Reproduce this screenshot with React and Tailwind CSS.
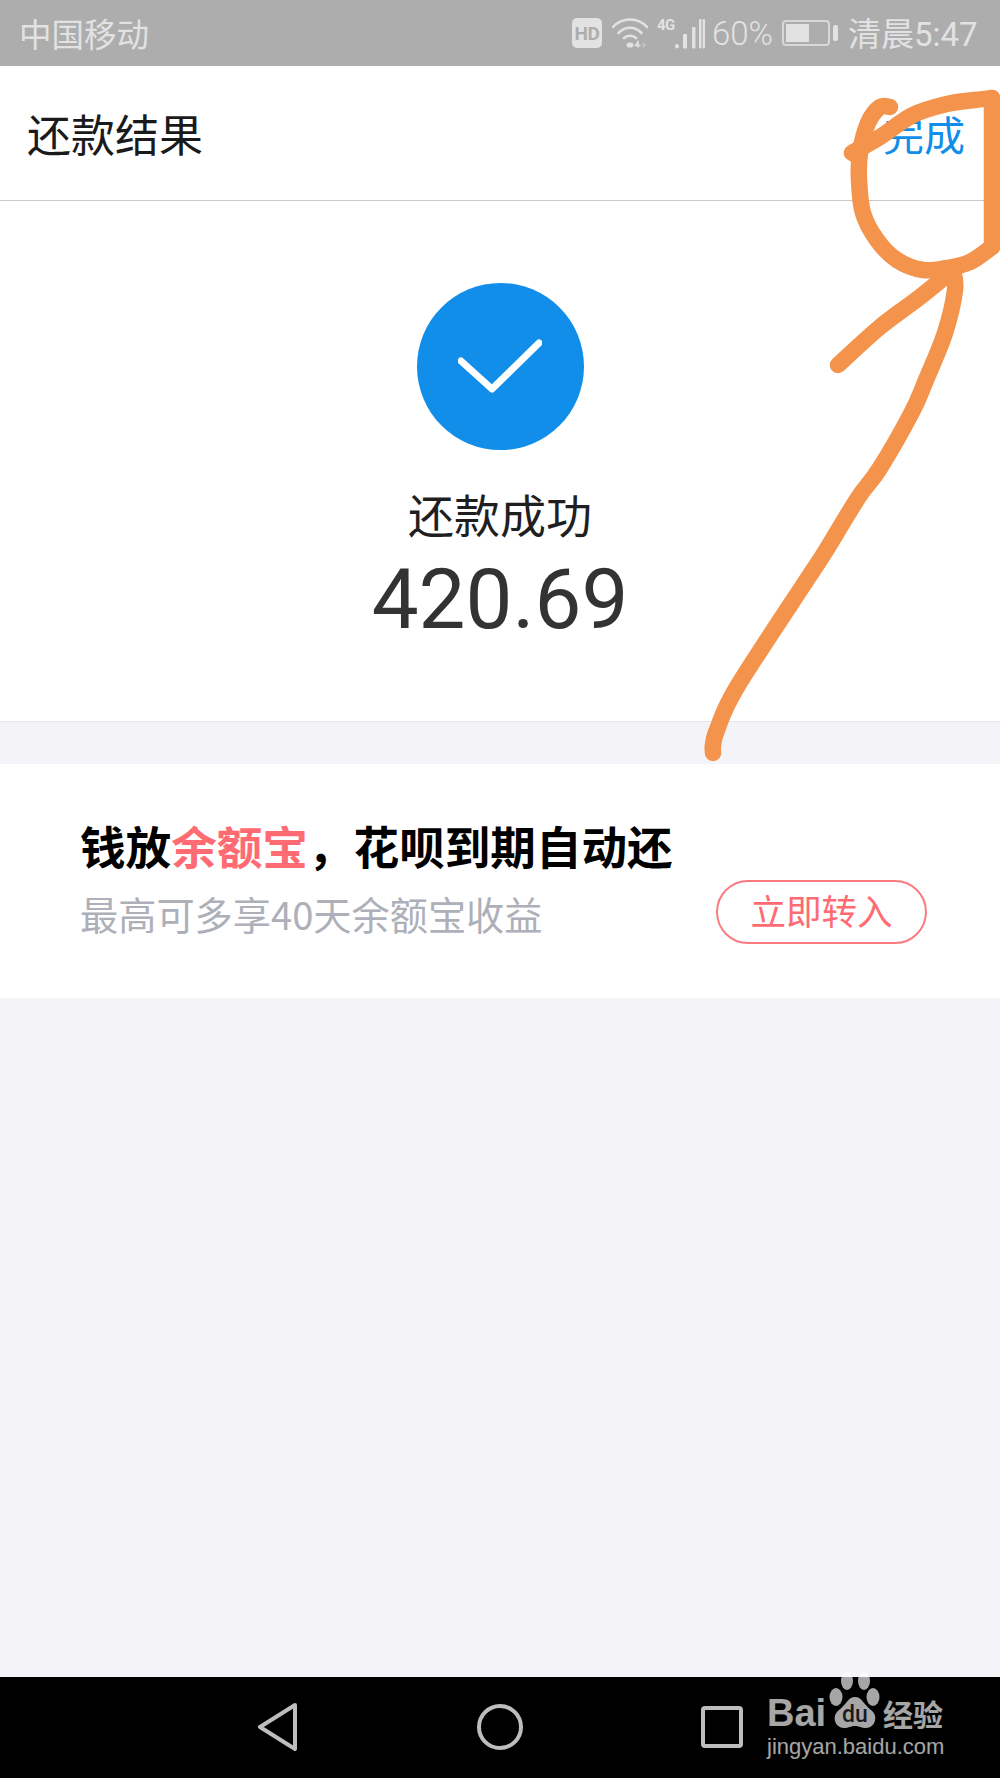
const CJK = "font-['Noto_Sans_CJK_SC','Noto_Sans',sans-serif]";

// traced points of the marker strokes, split where the pen made a corner
const SCRIBBLE_STROKES = [
  [[852, 153], [880, 137], [913, 115], [947, 104], [975, 100], [992, 98]],
  [[992, 98], [992, 247]],
  [[992, 247], [970, 262], [947, 268], [923, 270], [897, 260], [877, 240], [863, 213], [859, 180], [860, 153], [868, 123], [880, 107], [890, 107]],
  [[838, 365], [880, 327], [920, 297], [953, 270]],
  [[953, 270], [955, 290], [945, 333], [926, 380], [912, 412], [880, 468], [858, 498], [825, 552], [808, 578], [737, 687], [717, 730], [713, 745], [713, 753]],
];

function smoothPath(points) {
  let d = `M${points[0][0]} ${points[0][1]}`;
  for (let i = 0; i < points.length - 1; i += 1) {
    const p0 = points[Math.max(i - 1, 0)];
    const p1 = points[i];
    const p2 = points[i + 1];
    const p3 = points[Math.min(i + 2, points.length - 1)];
    const c1x = p1[0] + (p2[0] - p0[0]) / 6;
    const c1y = p1[1] + (p2[1] - p0[1]) / 6;
    const c2x = p2[0] - (p3[0] - p1[0]) / 6;
    const c2y = p2[1] - (p3[1] - p1[1]) / 6;
    d += ` C${c1x} ${c1y} ${c2x} ${c2y} ${p2[0]} ${p2[1]}`;
  }
  return d;
}

function StatusIcons() {
  return (
      <div className="flex items-center">
        <div className="flex h-[30px] w-[30px] items-center justify-center rounded-[5px] bg-[#e2e2e2] font-['Roboto',sans-serif] text-[19px] font-bold leading-none tracking-[-0.5px] text-[#adadad]">
          HD
        </div>
        <svg className="ml-[10px]" width="36" height="32" viewBox="0 0 36 32" fill="none" stroke="#e2e2e2" strokeWidth="2.6" strokeLinecap="round">
          <path d="M1 10 C10 0 26 0 35 10"/>
          <path d="M6.5 16 C13 9 23 9 29.5 16"/>
          <path d="M12 21 C15 18 21 18 24 21"/>
          <ellipse cx="18" cy="28" rx="3.5" ry="2.6" fill="#e2e2e2" stroke="none"/>
          <path d="M26 30 L26 25 L23.5 28.5 L28 28.5" strokeWidth="1.5" stroke="#e2e2e2"/>
          <path d="M31 25 L34 28 L31 31 Z" fill="#c4c4c4" stroke="none"/>
        </svg>
        <div className="relative ml-[9px] h-[32px] w-[48px]">
          <span className="absolute left-0 top-0 font-['Roboto',sans-serif] text-[15px] font-bold leading-[16px] tracking-[-0.6px] text-[#e2e2e2]">4G</span>
          <svg className="absolute bottom-0 left-[17px]" width="31" height="31" viewBox="0 0 31 31" fill="#e2e2e2">
            <rect x="1" y="26" width="4" height="4.5" rx="2"/>
            <rect x="9" y="16" width="4" height="14.5" rx="1"/>
            <rect x="18" y="9" width="3.5" height="21.5" rx="1"/>
            <rect x="25" y="1" width="2.4" height="29.5" rx="1"/>
            <rect x="28.6" y="1" width="2.4" height="29.5" rx="1"/>
          </svg>
        </div>
        <span className="ml-[7px] w-[60px] whitespace-nowrap font-['Roboto',sans-serif] text-[33px] font-light leading-none text-[#e2e2e2]">60%</span>
        <div className="ml-[10px] flex items-center">
          <div className="h-[26px] w-[48px] rounded-[4px] border-2 border-[#d8d8d8] p-[2px]">
            <div className="h-full w-[58%] bg-[#e2e2e2]"/>
          </div>
          <div className="ml-[3px] h-[16px] w-[5px] rounded-[2px] bg-[#e2e2e2]"/>
        </div>
        <span className="ml-[10px] w-[129px] whitespace-nowrap text-[33px] leading-none text-[#e2e2e2]">
          清晨<span className="font-['Roboto',sans-serif]">5:47</span>
        </span>
      </div>
  );
}

function BaiduMark() {
  return (
      <div className="pointer-events-none absolute left-[767px] top-[1670px] h-[92px] w-[182px] text-white/65">
        <span className="absolute left-0 top-[24px] font-['Liberation_Sans',sans-serif] text-[38px] font-bold leading-[38px]">Bai</span>
        <svg className="absolute left-[60px] top-0" width="56" height="60" viewBox="0 0 56 60" fill="white" fillOpacity="0.65">
          <ellipse cx="20" cy="11" rx="6" ry="9"/>
          <ellipse cx="37" cy="11" rx="6" ry="9"/>
          <ellipse cx="9" cy="27" rx="6.5" ry="9"/>
          <ellipse cx="46" cy="27" rx="6.5" ry="9"/>
          <path d="M28 27 C35 27 37 35 44 40 C52 46 48 58 39 58 C34 58 32 56 28 56 C24 56 22 58 17 58 C8 58 4 46 12 40 C19 35 21 27 28 27 Z"/>
          <text x="28" y="52" textAnchor="middle" fontFamily="Roboto" fontSize="23" fontWeight="500" fill="#000" fillOpacity="0.85">du</text>
        </svg>
        <span className={`absolute left-[116px] top-[26px] ${CJK} text-[30px] font-bold leading-[34px]`}>经验</span>
        <span className="absolute left-0 top-[65px] font-['Liberation_Sans',sans-serif] text-[22px] leading-[24px]">jingyan.baidu.com</span>
      </div>
  );
}

// the hand drawn marker strokes on top of the screenshot
function Scribble() {
  return (
      <svg className="pointer-events-none absolute left-0 top-0" width="1000" height="1778" viewBox="0 0 1000 1778" fill="none" stroke="#f4934b" strokeWidth="16.5" strokeLinecap="round" strokeLinejoin="round">
        {SCRIBBLE_STROKES.map((points, i) => (
            <path key={i} d={smoothPath(points)}/>
        ))}
      </svg>
  );
}

export default function App() {
  return (
      <div className={`relative flex h-[1778px] w-[1000px] flex-col overflow-hidden bg-[#f3f3f8] ${CJK}`}>
        <div className="flex h-[66px] shrink-0 items-center justify-between bg-[#adadad] pl-[19px] pr-[23px]">
          <span className="text-[32.5px] leading-none text-[#e2e2e2]">中国移动</span>
          <StatusIcons/>
        </div>

        <div className="flex h-[135px] shrink-0 items-center justify-between border-b border-[#c9c9c9] bg-white pl-[27px] pr-[35px]">
          <span className="text-[44px] leading-none text-[#1a1a1a]">还款结果</span>
          <span className="text-[41px] leading-none text-[#108ee9]">完成</span>
        </div>

        <div className="flex h-[521px] shrink-0 flex-col items-center border-b border-[#e8e8ea] bg-white pt-[82px]">
          <div className="flex h-[167px] w-[167px] items-center justify-center rounded-full bg-[#108ee9]">
            <svg width="84" height="60" viewBox="0 0 84 60" fill="none" stroke="white" strokeWidth="7" strokeLinecap="round" strokeLinejoin="round">
              <path d="M3 24 L34 52 L81 6"/>
            </svg>
          </div>
          <div className="mt-[33px] text-[46px] leading-[60px] text-[#1f1f1f]">还款成功</div>
          <div className="mt-[7px] font-['Roboto',sans-serif] text-[83.5px] leading-[100px] text-[#333333]">420.69</div>
        </div>

        <div className="mt-[42px] flex h-[234px] shrink-0 items-start justify-between bg-white pl-[80px] pr-[73px] pt-[53px]">
          <div>
            <div className="text-[45.6px] font-bold leading-[56px] text-black">
              钱放<span className="text-[#ff6b73]">余额宝</span>，花呗到期自动还
            </div>
            <div className="mt-[16px] text-[38.2px] leading-[50px] text-[#adb0b9]">最高可多享40天余额宝收益</div>
          </div>
          <button className="mt-[63px] flex h-[64px] w-[211px] items-center justify-center rounded-full border-2 border-[#fb7a80] pb-[4px] text-[35.5px] leading-none text-[#ff6b73]">
            立即转入
          </button>
        </div>

        <div className="flex-1"/>

        <div className="flex h-[101px] shrink-0 items-center justify-center bg-black pb-[2px]">
          <div className="flex w-[222px] justify-center">
            <svg width="40" height="48" viewBox="0 0 40 48" fill="none" stroke="#bdbdbd" strokeWidth="4" strokeLinejoin="round">
              <path d="M37 2 L2 24 L37 46 Z" strokeLinecap="round"/>
            </svg>
          </div>
          <div className="flex w-[222px] justify-center">
            <div className="h-[46px] w-[46px] rounded-full border-[4px] border-[#bdbdbd]"/>
          </div>
          <div className="flex w-[222px] justify-center">
            <div className="h-[42px] w-[42px] rounded-[4px] border-[4px] border-[#bdbdbd]"/>
          </div>
        </div>

        <BaiduMark/>
        <Scribble/>
      </div>
  );
}
